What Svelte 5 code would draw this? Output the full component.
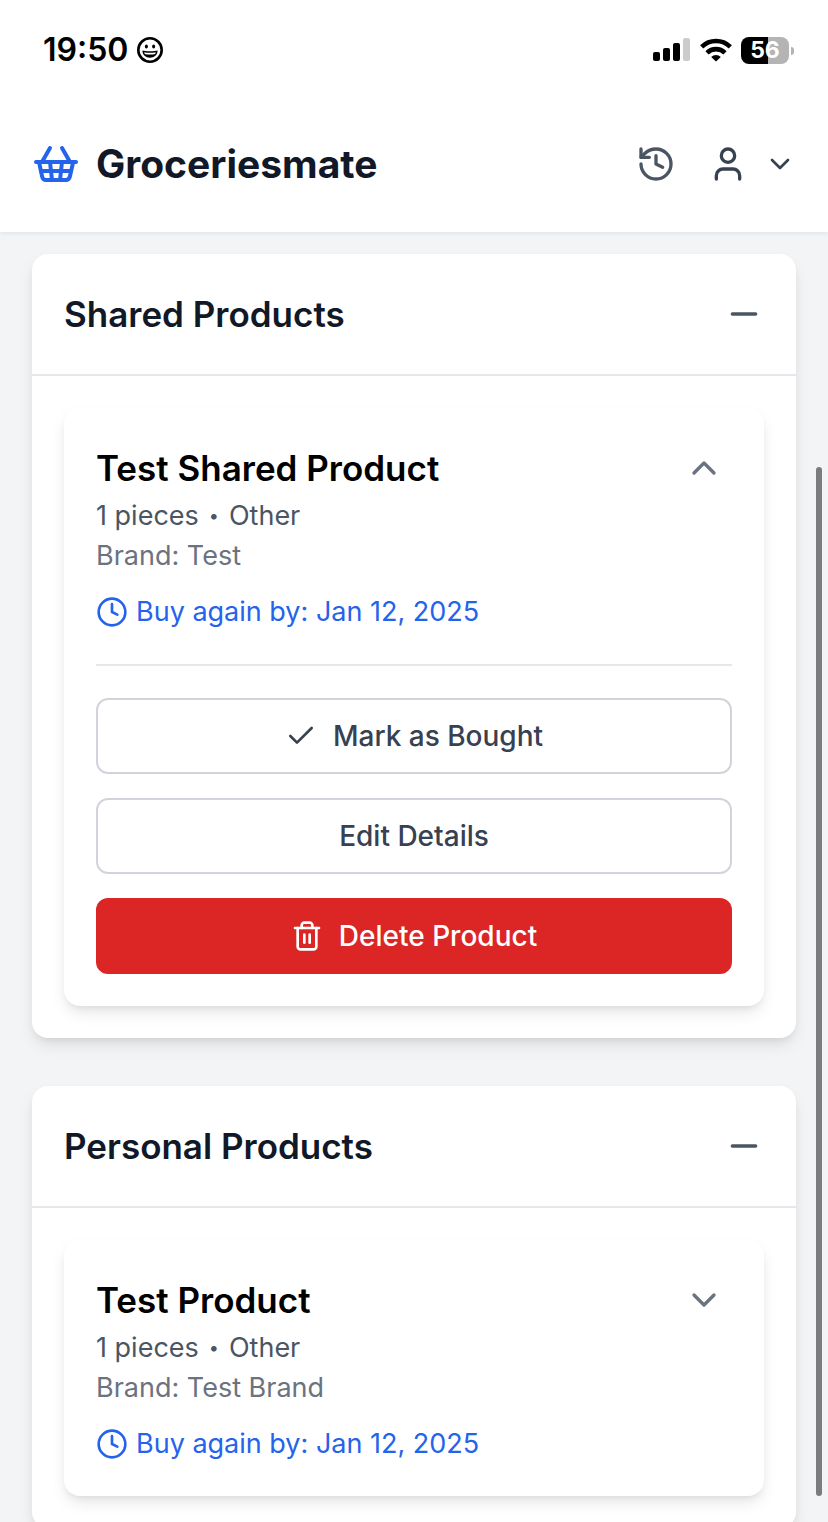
<script lang="ts">
  type Product = { id: number; name: string; qty: string; category: string; brand: string; buyBy: string; open: boolean };
  type Section = { id: string; title: string; open: boolean; products: Product[] };

  let sections = $state<Section[]>([
    {
      id: "shared", title: "Shared Products", open: true,
      products: [
        { id: 1, name: "Test Shared Product", qty: "1 pieces", category: "Other", brand: "Test", buyBy: "Jan 12, 2025", open: true },
      ],
    },
    {
      id: "personal", title: "Personal Products", open: true,
      products: [
        { id: 2, name: "Test Product", qty: "1 pieces", category: "Other", brand: "Test Brand", buyBy: "Jan 12, 2025", open: false },
      ],
    },
  ]);

  // stroke icons on a 24 grid
  const icons: Record<string, string[]> = {
    basket: [
      "m15 11-1 9", "m19 11-4-7", "M2 11h20",
      "m3.5 11 1.6 7.4a2 2 0 0 0 2 1.6h9.8c.9 0 1.8-.7 2-1.6l1.7-7.4",
      "M4.5 15.5h15", "m5 11 4-7", "m9 11 1 9",
    ],
    history: ["M3 12a9 9 0 1 0 9-9 9.75 9.75 0 0 0-6.74 2.74L3 8", "M3 3v5h5", "M12 7v5l4 2"],
    user: ["M19 21v-2a4 4 0 0 0-4-4H9a4 4 0 0 0-4 4v2", "M12 3a4 4 0 1 0 0 8 4 4 0 0 0 0-8z"],
    down: ["m6 9 6 6 6-6"],
    up: ["m18 15-6-6-6 6"],
    minus: ["M5 12h14"],
    plus: ["M5 12h14", "M12 5v14"],
    clock: ["M12 2a10 10 0 1 0 0 20 10 10 0 0 0 0-20z", "M12 6v6l4 2"],
    check: ["M20 6 9 17l-5-5"],
    trash: [
      "M3 6h18", "M19 6v14c0 1-1 2-2 2H7c-1 0-2-1-2-2V6",
      "M8 6V4c0-1 1-2 2-2h4c1 0 2 1 2 2v2", "M10 11v6", "M14 11v6",
    ],
  };
</script>

{#snippet icon(name: string, size: number)}
  <svg class="icon" width={size} height={size} viewBox="0 0 24 24" aria-hidden="true">
    {#each icons[name] as d}<path {d} />{/each}
  </svg>
{/snippet}

<div class="app">
  <header class="top">
    <div class="status">
      <div class="clock">
        <span>19:50</span>
        <svg width="28" height="28" viewBox="0 0 28 28" aria-hidden="true">
          <circle cx="14" cy="14" r="11.7" fill="none" stroke="#000" stroke-width="2.6" />
          <ellipse cx="10.4" cy="10.6" rx="1.5" ry="2" />
          <ellipse cx="17.6" cy="10.6" rx="1.5" ry="2" />
          <path d="M6.4 14.6c2.4.9 12.8.9 15.2 0 0 4.4-3.3 7.2-7.6 7.2s-7.6-2.8-7.6-7.2z" />
          <path d="M8.2 16.3c3 .7 8.6.7 11.6 0l-.6 1.6c-3 .7-7.4.7-10.4 0z" fill="#fff" />
        </svg>
      </div>
      <div class="signals">
        <svg width="38" height="24" viewBox="0 0 38 24" aria-hidden="true">
          <rect x="0" y="14" width="7" height="9" rx="2" />
          <rect x="10" y="10" width="7" height="13" rx="2" />
          <rect x="20" y="5" width="7" height="18" rx="2" />
          <rect x="30" y="0" width="7" height="23" rx="2" fill="#ccc" />
        </svg>
        <svg width="32" height="24" viewBox="0 0 32 24" aria-hidden="true">
          <g fill="none" stroke="#000" stroke-width="4.6">
            <path d="M1.700 8.800a20.500 20.500 0 0 1 28.600 0" />
            <path d="M7 14.800a12.900 12.900 0 0 1 18 0" />
          </g>
          <path d="M16 23.500l-4.800-4.500a6.800 6.800 0 0 1 9.600 0z" />
        </svg>
        <div class="battery"><span>56</span></div>
      </div>
    </div>
    <nav class="bar">
      <a class="brand" href="#home">{@render icon("basket", 48)}<span>Groceriesmate</span></a>
      <div class="actions">
        <button class="plain history" aria-label="History">{@render icon("history", 40)}</button>
        <button class="plain account" aria-label="Account">
          {@render icon("user", 40)}{@render icon("down", 32)}
        </button>
      </div>
    </nav>
  </header>

  <main>
    {#each sections as section (section.id)}
      <section class="panel">
        <div class="panel-head">
          <h2>{section.title}</h2>
          <button class="plain" aria-label="Toggle {section.title}" aria-expanded={section.open}
                  onclick={() => (section.open = !section.open)}>
            {@render icon(section.open ? "minus" : "plus", 40)}
          </button>
        </div>
        {#if section.open}
          <div class="panel-body">
            {#each section.products as product (product.id)}
              <article class="card">
                <div class="card-head">
                  <h3>{product.name}</h3>
                  <button class="plain toggle" aria-label="Toggle {product.name}" aria-expanded={product.open}
                          onclick={() => (product.open = !product.open)}>
                    {@render icon(product.open ? "up" : "down", 40)}
                  </button>
                </div>
                <p class="meta"><span>{product.qty}</span><span class="dot">•</span><span>{product.category}</span></p>
                <p class="maker">Brand: {product.brand}</p>
                <p class="due">{@render icon("clock", 32)}<span>Buy again by: {product.buyBy}</span></p>
                {#if product.open}
                  <div class="buttons">
                    <button class="btn">{@render icon("check", 32)}Mark as Bought</button>
                    <button class="btn">Edit Details</button>
                    <button class="btn danger">{@render icon("trash", 32)}Delete Product</button>
                  </div>
                {/if}
              </article>
            {/each}
          </div>
        {/if}
      </section>
    {/each}
  </main>
  <div class="thumb"></div>
</div>

<style>
  :global(body) { margin: 0; background: #f3f4f6; }
  .app {
    position: relative; display: flex; flex-direction: column; height: 100vh; overflow: hidden;
    background: #f3f4f6; color: #111827; font-family: Inter, "Liberation Sans", sans-serif;
    font-size: 27px; line-height: 40px;
  }
  h2, h3, p { margin: 0; }
  .icon {
    display: block; flex: none; fill: none; stroke: currentColor; stroke-width: 2;
    stroke-linecap: round; stroke-linejoin: round;
  }

  .top { position: relative; flex: none; background: #fff; box-shadow: 0 2px 4px rgba(0,0,0,0.06); }
  .status {
    display: flex; align-items: center; justify-content: space-between;
    height: 100px; padding: 0 39px 0 43px; color: #000;
  }
  .clock { display: flex; align-items: center; gap: 8px; font-size: 32px; font-weight: 600; }
  .signals { display: flex; align-items: center; gap: 9px; }
  .battery {
    position: relative; width: 48px; height: 27px; border-radius: 8px; text-align: center;
    background: linear-gradient(90deg, #000 56%, #b4b4b4 56%);
    color: #fff; font-size: 23px; line-height: 27px; font-weight: 700;
  }
  .battery::after {
    content: ""; position: absolute; right: -5px; top: 10px; width: 3px; height: 8px;
    border-radius: 0 4px 4px 0; background: #b4b4b4;
  }
  .bar { display: flex; align-items: center; justify-content: space-between; padding: 36px 32px 40px; height: 56px; }
  .brand {
    display: flex; align-items: center; gap: 16px; color: #111827; text-decoration: none;
    font-size: 39px; line-height: 56px; font-weight: 700;
  }
  .brand .icon { color: #2563eb; }
  .actions { display: flex; align-items: center; gap: 32px; }
  .plain { display: flex; align-items: center; padding: 0; border: 0; background: none; color: #4b5563; cursor: pointer; }
  .account { gap: 16px; color: #374151; }

  main { display: flex; flex-direction: column; gap: 48px; flex: 1; min-height: 0; padding: 22px 32px 0; }
  .panel, .card {
    flex: none; background: #fff; border-radius: 16px;
    box-shadow: 0 8px 16px -2px rgba(0,0,0,0.1), 0 4px 8px -4px rgba(0,0,0,0.1);
  }
  .panel-head {
    display: flex; align-items: center; justify-content: space-between;
    padding: 32px; border-bottom: 2px solid #e5e7eb;
  }
  h2, h3 { font-size: 35px; line-height: 56px; font-weight: 600; }
  h3 { color: #000; }
  .panel-body { padding: 32px; }
  .card { padding: 32px; }
  .card-head { display: flex; align-items: center; justify-content: space-between; }
  .toggle { padding: 8px; color: #6b7280; }
  .meta { display: flex; gap: 10px; color: #4b5563; }
  .dot { font-size: 18px; }
  .maker { color: #6b7280; }
  .due { display: flex; align-items: center; gap: 8px; margin-top: 16px; color: #2563eb; }
  .buttons {
    display: flex; flex-direction: column; gap: 24px;
    margin-top: 32px; padding-top: 32px; border-top: 2px solid #e5e7eb;
  }
  .btn {
    display: flex; align-items: center; justify-content: center; gap: 16px;
    padding: 16px; border: 2px solid #d1d5db; border-radius: 12px; background: #fff; color: #374151;
    font: inherit; font-size: 28px; font-weight: 500; cursor: pointer;
  }
  .btn.danger { border-color: #dc2626; background: #dc2626; color: #fff; }

  /* overlay scroll indicator */
  .thumb { position: absolute; right: 6px; top: 467px; bottom: 26px; width: 6px; border-radius: 3px; background: #7b7c7e; }
</style>
